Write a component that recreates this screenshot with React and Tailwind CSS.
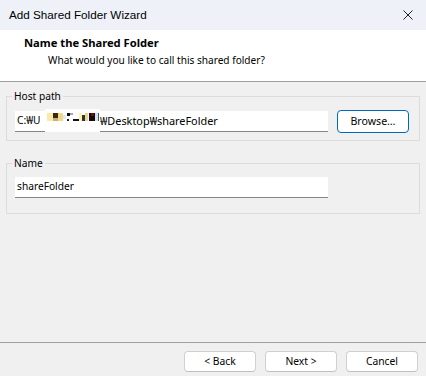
import React from 'react';

const font = { fontFamily: '"Noto Sans", "Liberation Sans", sans-serif' };

const Mosaic = () => (
  <svg width="55" height="23" viewBox="0 0 55 23" className="inline-block align-top -mt-[2px] shrink-0">
    <rect x="0" y="0" width="55" height="23" fill="#ffffff" />
    <rect x="2" y="4" width="6" height="8" fill="#fbe9a8" />
    <rect x="8" y="4" width="5" height="5" fill="#3a2a10" />
    <rect x="8" y="9" width="5" height="3" fill="#c8b070" />
    <rect x="13" y="4" width="5" height="8" fill="#f4d88a" />
    <rect x="18" y="6" width="3" height="4" fill="#d8ecf8" />
    <rect x="22" y="4" width="3" height="3" fill="#111" />
    <rect x="25" y="4" width="3" height="2" fill="#9ab" />
    <rect x="22" y="10" width="2" height="2" fill="#222" />
    <rect x="28" y="10" width="6" height="2" fill="#111" />
    <rect x="34" y="4" width="3" height="8" fill="#fff2b0" />
    <rect x="37" y="6" width="3" height="6" fill="#333" />
    <rect x="40" y="4" width="3" height="8" fill="#e8d890" />
    <rect x="44" y="4" width="6" height="8" fill="#1a0a0a" />
    <rect x="46" y="4" width="3" height="3" fill="#6a1010" />
    <rect x="50" y="4" width="3" height="8" fill="#c9e6f4" />
    <rect x="53" y="4" width="1" height="8" fill="#555" />
  </svg>
);

const Field = ({ children, className = '' }) => (
  <div
    className={`h-[21px] bg-white border-b border-[#868686] flex items-center pl-[2px] text-[10.2px] text-black overflow-visible whitespace-nowrap ${className}`}
  >
    {children}
  </div>
);

const Btn = ({ children, primary }) => (
  <button
    className={`w-[72px] rounded-[4px] bg-white text-[10.3px] text-black flex items-center justify-center ${
      primary ? 'border border-[#0067c0] h-[23px] text-[10.6px]' : 'h-[21px] border border-[#d0d0d0] border-b-[#c0c0c0]'
    }`}
  >
    {children}
  </button>
);

export default function App() {
  return (
    <div className="w-[426px] h-[376px] flex flex-col bg-[#f0f0f0] overflow-hidden" style={font}>
      {/* title bar */}
      <div className="h-[30px] bg-[#eef2f8] flex items-center justify-between pl-[9px] pr-[13px]">
        <span className="text-[11.7px] text-black" style={{ fontFamily: '"Liberation Sans", sans-serif' }}>
          Add Shared Folder Wizard
        </span>
        <svg width="10" height="10" viewBox="0 0 10 10">
          <path d="M0.5 0.5L9.5 9.5M9.5 0.5L0.5 9.5" stroke="#222" strokeWidth="1" />
        </svg>
      </div>

      {/* header */}
      <div className="h-[52px] bg-white border-b border-[#a0a0a0] pt-[5px] pl-[24px]">
        <div className="text-[11.2px] leading-[16px] font-bold text-black">Name the Shared Folder</div>
        <div className="text-[10.1px] leading-[16px] mt-[1px] pl-[24px] text-black">
          What would you like to call this shared folder?
        </div>
      </div>

      {/* body */}
      <div className="flex-1 pt-[7px] px-[6px]">
        <fieldset className="border border-[#dcdcdc] pl-[8px] pr-[9px] pt-[7px] pb-[7px]">
          <legend className="text-[10.2px] leading-[14px] px-[2px] -ml-[3px] text-black">Host path</legend>
          <div className="flex items-center gap-[9px]">
            <Field className="w-[313px]">
              <span className="inline-block w-[28px]">C:₩U</span>
              <Mosaic />
              <span className="text-[10.9px]">₩Desktop₩shareFolder</span>
            </Field>
            <Btn primary>Browse…</Btn>
          </div>
        </fieldset>

        <fieldset className="mt-[15px] border border-[#dcdcdc] pl-[8px] pr-[9px] pt-[7px] pb-[15px]">
          <legend className="text-[10.2px] leading-[14px] px-[2px] -ml-[3px] text-black">Name</legend>
          <Field className="w-[313px]">shareFolder</Field>
        </fieldset>
      </div>

      {/* footer */}
      <div className="h-[34px] border-t border-[#a0a0a0] flex justify-end items-start gap-[9px] pt-[8px] pr-[8px]">
        <Btn>&lt; Back</Btn>
        <Btn>Next &gt;</Btn>
        <Btn>Cancel</Btn>
      </div>
    </div>
  );
}
